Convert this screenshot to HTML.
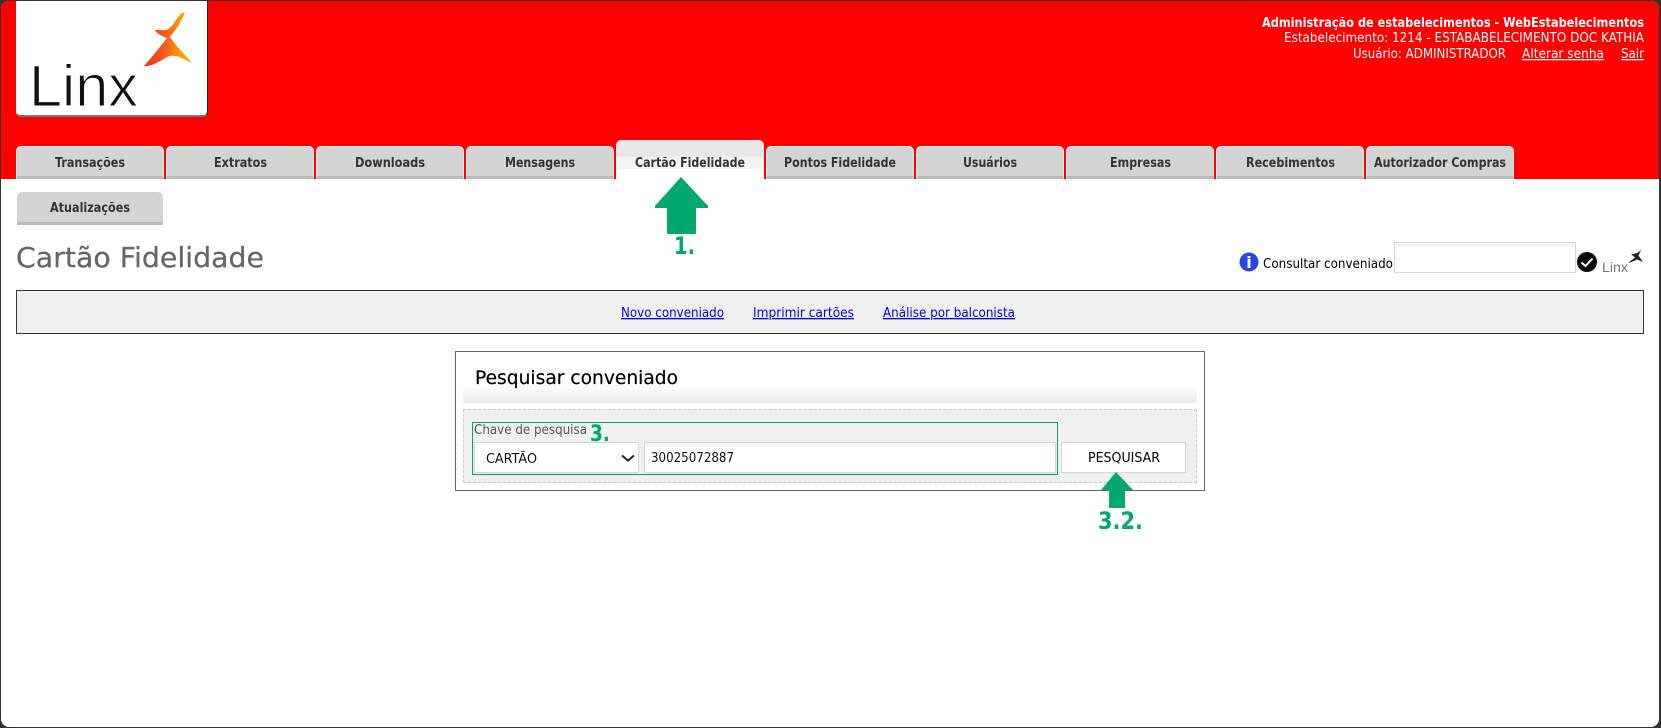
<!DOCTYPE html>
<html lang="pt-BR">
<head>
<meta charset="utf-8">
<title>Cartão Fidelidade</title>
<style>
html,body{margin:0;padding:0;width:1661px;height:728px;overflow:hidden;background:#333}
#page{position:absolute;left:1px;top:1px;width:1658px;height:726px;background:#fff;border-radius:8px;overflow:hidden}
.b{position:absolute;box-sizing:border-box}
.t{top:145px;width:148px;height:33px;background:#d4d4d4;border:1px solid #eee;border-bottom:3px solid #bbb;border-radius:5px 5px 0 0}
svg{position:absolute;left:0;top:0}
text{font-family:"DejaVu Sans","Liberation Sans",sans-serif}
.tab{fill:#333;font-size:13px;font-weight:bold}
a text{fill:#0000ee;text-decoration:underline;font-size:13px}
</style>
</head>
<body>
<div id="page">
  <div class="b" style="left:0;top:0;width:1658px;height:178px;background:#f00"></div>
  <div class="b" style="left:15px;top:0;width:192px;height:116px;background:#fff;border-right:1.5px solid #222;border-bottom:2px solid #777;border-radius:0 0 5px 5px"></div>

  <div class="b t" style="left:15px"></div>
  <div class="b t" style="left:165px"></div>
  <div class="b t" style="left:315px"></div>
  <div class="b t" style="left:465px"></div>
  <div class="b" style="left:615px;top:139px;width:148px;height:40px;background:linear-gradient(#e8e8e8 0,#e8e8e8 17px,#f4f4f4 17px,#f4f4f4 29px,#fff 29px);border-radius:5px 5px 0 0"></div>
  <div class="b t" style="left:765px"></div>
  <div class="b t" style="left:915px"></div>
  <div class="b t" style="left:1065px"></div>
  <div class="b t" style="left:1215px"></div>
  <div class="b t" style="left:1365px"></div>

  <div class="b" style="left:16px;top:191px;width:146px;height:33px;background:#d4d4d4;border-bottom:3px solid #bbb;border-radius:5px 5px 0 0"></div>

  <div class="b" style="left:1393px;top:241px;width:182px;height:31px;background:linear-gradient(#f6f6f6 0,#f6f6f6 4px,#fff 4px);border:1px solid #d5d5d5"></div>

  <div class="b" style="left:15px;top:289px;width:1628px;height:44px;background:#f0f0f0;border:1px solid #333"></div>

  <div class="b" style="left:454px;top:350px;width:750px;height:140px;background:#fff;border:1px solid #666"></div>
  <div class="b" style="left:462px;top:385px;width:734px;height:17px;background:linear-gradient(#fff,#e9e9e9)"></div>
  <div class="b" style="left:462px;top:408px;width:734px;height:74px;background:#f0f0f0;border:1px dashed #ccc"></div>
  <div class="b" style="left:473px;top:441px;width:165px;height:31px;background:#fff;border:1px solid #d5d5d5"></div>
  <div class="b" style="left:643px;top:441px;width:412px;height:31px;background:linear-gradient(#f6f6f6 0,#f6f6f6 4px,#fff 4px);border:1px solid #d5d5d5"></div>
  <div class="b" style="left:1060px;top:441px;width:125px;height:31px;background:#fff;border:1px solid #d5d5d5"></div>
  <div class="b" style="left:471px;top:421px;width:586px;height:53px;border:1px solid #00a86b"></div>

  <svg width="1658" height="726" viewBox="1 1 1658 726" xmlns="http://www.w3.org/2000/svg">
    <defs>
      <linearGradient id="g" x1="0" y1="0" x2="1" y2="0">
        <stop offset="0" stop-color="#ee2f25"/>
        <stop offset=".5" stop-color="#f7641a"/>
        <stop offset=".75" stop-color="#ff9a00"/>
        <stop offset="1" stop-color="#ffa000"/>
      </linearGradient>
    </defs>

    <!-- Logo -->
    <path d="M185 12 C181 13 179 16 176 20 C173 25 170 29 166 30 C162 31 158 29 155 30 C157 34 162 36 167 38 C160 47 152 57 144 66 C152 67 160 61 169 56 C177 54 185 60 192 63 C184 54 176 46 170 37 C176 30 181 22 185 12 Z" fill="url(#g)"/>
    <text x="29" y="106" font-size="58" textLength="109" lengthAdjust="spacingAndGlyphs" style="font-family:'Liberation Sans',sans-serif" fill="#111" stroke="#fff" stroke-width="1.1">Linx</text>

    <!-- Header text -->
    <text x="1262" y="27" font-size="13" font-weight="bold" fill="#fff" textLength="382" lengthAdjust="spacingAndGlyphs">Administração de estabelecimentos - WebEstabelecimentos</text>
    <text x="1284" y="42" font-size="13" fill="#fff" textLength="360" lengthAdjust="spacingAndGlyphs">Estabelecimento: 1214 - ESTABABELECIMENTO DOC KATHIA</text>
    <text x="1353" y="58" font-size="13" fill="#fff" textLength="153" lengthAdjust="spacingAndGlyphs">Usuário: ADMINISTRADOR</text>
    <a href="#"><text x="1522" y="58" style="fill:#fff;font-size:13px;text-decoration:underline" textLength="82" lengthAdjust="spacingAndGlyphs">Alterar senha</text></a>
    <a href="#"><text x="1621" y="58" style="fill:#fff;font-size:13px;text-decoration:underline" textLength="23" lengthAdjust="spacingAndGlyphs">Sair</text></a>

    <!-- Tabs -->
    <text class="tab" x="55" y="167" textLength="70" lengthAdjust="spacingAndGlyphs">Transações</text>
    <text class="tab" x="214" y="167" textLength="53" lengthAdjust="spacingAndGlyphs">Extratos</text>
    <text class="tab" x="355" y="167" textLength="70" lengthAdjust="spacingAndGlyphs">Downloads</text>
    <text class="tab" x="505" y="167" textLength="70" lengthAdjust="spacingAndGlyphs">Mensagens</text>
    <text class="tab" x="635" y="167" textLength="110" lengthAdjust="spacingAndGlyphs">Cartão Fidelidade</text>
    <text class="tab" x="784" y="167" textLength="112" lengthAdjust="spacingAndGlyphs">Pontos Fidelidade</text>
    <text class="tab" x="963" y="167" textLength="54" lengthAdjust="spacingAndGlyphs">Usuários</text>
    <text class="tab" x="1110" y="167" textLength="61" lengthAdjust="spacingAndGlyphs">Empresas</text>
    <text class="tab" x="1246" y="167" textLength="89" lengthAdjust="spacingAndGlyphs">Recebimentos</text>
    <text class="tab" x="1374" y="167" textLength="132" lengthAdjust="spacingAndGlyphs">Autorizador Compras</text>
    <text class="tab" x="50" y="212" textLength="80" lengthAdjust="spacingAndGlyphs">Atualizações</text>

    <!-- Title -->
    <text x="16" y="267" font-size="28" fill="#666" stroke="#666" stroke-width=".25" textLength="248" lengthAdjust="spacingAndGlyphs">Cartão Fidelidade</text>

    <!-- Consultar -->
    <circle cx="1249" cy="262" r="9.5" fill="#2a48e0"/>
    <text x="1249" y="268" font-size="16" font-weight="bold" fill="#fff" text-anchor="middle">i</text>
    <text x="1263" y="268" font-size="13" fill="#000" textLength="130" lengthAdjust="spacingAndGlyphs">Consultar conveniado</text>
    <circle cx="1587" cy="262" r="10" fill="#0a0a0a"/>
    <path d="M1581.5 262.5 L1585.5 266 L1592.5 258.5" fill="none" stroke="#fff" stroke-width="2"/>
    <text x="1602" y="272" font-size="14" fill="#777" textLength="26" lengthAdjust="spacingAndGlyphs" style="font-family:'Liberation Sans',sans-serif">Linx</text>
    <path d="M1642 248 C1640 252 1637 254 1631 254 L1635 257.500 L1628 263 C1632 262 1635 260.500 1637 259.500 L1643 262 L1638.500 255.500 Z" fill="#222"/>

    <!-- Menu links -->
    <a href="#"><text x="621" y="317" textLength="103" lengthAdjust="spacingAndGlyphs">Novo conveniado</text></a>
    <a href="#"><text x="753" y="317" textLength="101" lengthAdjust="spacingAndGlyphs">Imprimir cartões</text></a>
    <a href="#"><text x="883" y="317" textLength="132" lengthAdjust="spacingAndGlyphs">Análise por balconista</text></a>

    <!-- Panel -->
    <text x="475" y="384" font-size="19" fill="#000" stroke="#000" stroke-width=".2" textLength="203" lengthAdjust="spacingAndGlyphs">Pesquisar conveniado</text>
    <text x="474" y="434" font-size="13" fill="#555" textLength="113" lengthAdjust="spacingAndGlyphs">Chave de pesquisa</text>
    <text x="486" y="463" font-size="13" fill="#111" textLength="51" lengthAdjust="spacingAndGlyphs">CARTÃO</text>
    <path d="M622 455.500 L628 460.500 L634 455.500" fill="none" stroke="#222" stroke-width="2"/>
    <text x="651" y="462" font-size="13" fill="#111" textLength="83" lengthAdjust="spacingAndGlyphs">30025072887</text>
    <text x="1088" y="462" font-size="13" fill="#000" textLength="72" lengthAdjust="spacingAndGlyphs">PESQUISAR</text>

    <!-- Annotations -->
    <path d="M681 177 L708 206 L708 208 L696 208 L696 233 Q696 234 695 234 L668 234 Q667 234 667 233 L667 208 L655 208 L655 206 Z" fill="#00a86b"/>
    <text x="674" y="254" font-size="24" font-weight="bold" fill="#00a86b" textLength="21" lengthAdjust="spacingAndGlyphs">1.</text>
    <path d="M1116 472 L1133 490 L1125 490 L1125 508 L1109 508 L1109 490 L1101 490 Z" fill="#00a86b"/>
    <text x="1098" y="529" font-size="24" font-weight="bold" fill="#00a86b" textLength="45" lengthAdjust="spacingAndGlyphs">3.2.</text>
    <text x="590" y="441" font-size="22" font-weight="bold" fill="#00a86b" textLength="20" lengthAdjust="spacingAndGlyphs">3.</text>
  </svg>
</div>
</body>
</html>
